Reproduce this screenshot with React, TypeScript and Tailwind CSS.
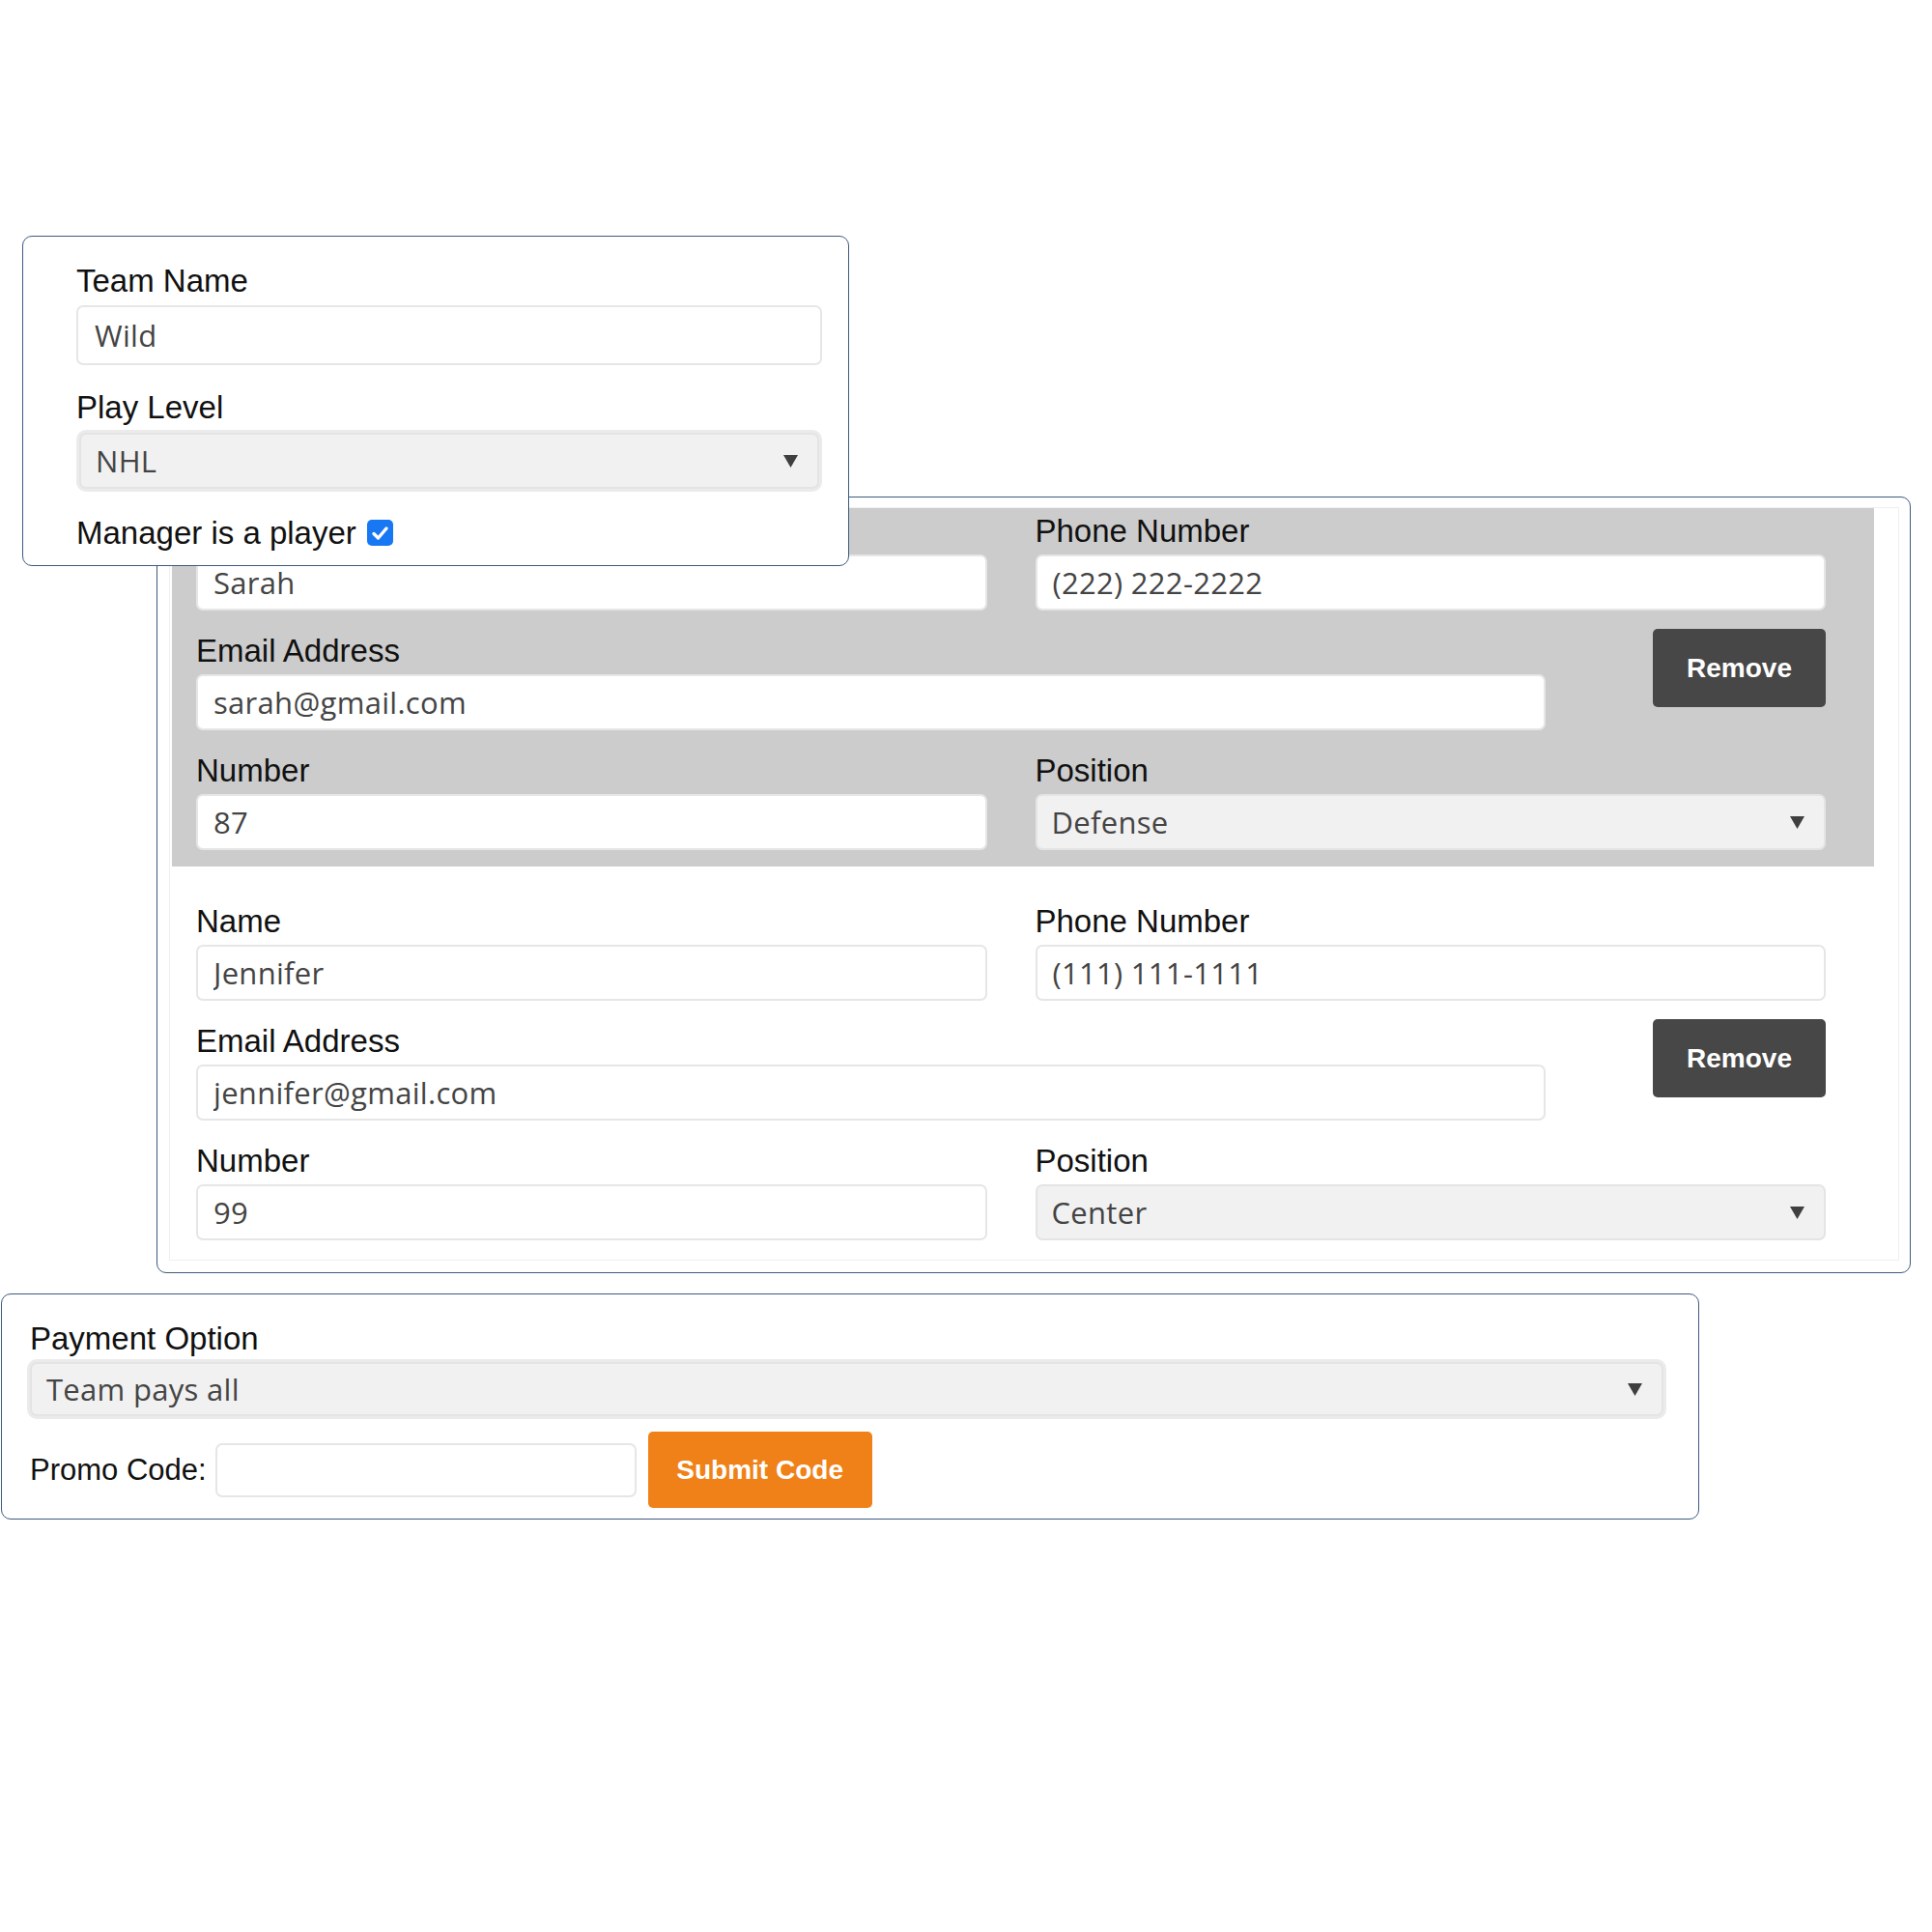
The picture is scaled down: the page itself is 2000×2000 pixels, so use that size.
import React from "react";

const label =
  "block whitespace-nowrap font-['Liberation_Sans',Arial,sans-serif] text-[33px] leading-[37px] text-[#111]";
const field =
  "rounded-[7px] border-2 border-[#e6e6e6] bg-white px-[16px] font-['Open_Sans',sans-serif] text-[31px] tracking-[0.3px] text-[#444] outline-none";

function Arrow() {
  return (
    <svg width="15" height="13" viewBox="0 0 15 13" aria-hidden="true" className="shrink-0">
      <polygon points="0,0 15,0 7.5,13" fill="#3f3f3f" />
    </svg>
  );
}

function Select({ value, ring = false, height = 58 }: { value: string; ring?: boolean; height?: number }) {
  const box = (
    <div
      className="flex items-center justify-between rounded-[7px] border-2 border-[#e4e4e4] bg-[#f1f1f1] pl-[15px] pr-[20px] font-['Open_Sans',sans-serif] text-[31px] tracking-[0.3px] text-[#444]"
      style={{ height }}
    >
      <span>{value}</span>
      <Arrow />
    </div>
  );
  if (!ring) return box;
  return <div className="rounded-[10px] bg-[#ebebeb] p-[3px]">{box}</div>;
}

function Field({ name, value, className = "" }: { name: string; value: string; className?: string }) {
  return (
    <div className={className}>
      <span className={label}>{name}</span>
      <input readOnly value={value} className={`${field} mt-[6px] h-[58px] w-full`} />
    </div>
  );
}

type Player = { name: string; phone: string; email: string; number: string; position: string; active?: boolean };

const players: Player[] = [
  { name: "Sarah", phone: "(222) 222-2222", email: "sarah@gmail.com", number: "87", position: "Defense", active: true },
  { name: "Jennifer", phone: "(111) 111-1111", email: "jennifer@gmail.com", number: "99", position: "Center" },
];

function PlayerRow({ player }: { player: Player }) {
  return (
    <div className={`pl-[25px] pr-[50px] pt-[5px] pb-[17px] ${player.active ? "bg-[#cccccc]" : "bg-white"}`}>
      <div className="grid grid-cols-2 gap-x-[50px]">
        <Field name="Name" value={player.name} />
        <Field name="Phone Number" value={player.phone} />
      </div>
      <div className="mt-[23px] flex items-start justify-between">
        <Field name="Email Address" value={player.email} className="w-[1397px]" />
        <button className="-mt-[4px] h-[81px] w-[179px] rounded-[5px] bg-[#474747] font-['Liberation_Sans',Arial,sans-serif] text-[28px] font-bold text-white">
          Remove
        </button>
      </div>
      <div className="mt-[23px] grid grid-cols-2 gap-x-[50px]">
        <Field name="Number" value={player.number} />
        <div>
          <span className={label}>Position</span>
          <div className="mt-[6px]">
            <Select value={player.position} />
          </div>
        </div>
      </div>
    </div>
  );
}

export default function App() {
  return (
    <div className="min-h-[2000px] w-[2000px] bg-white pt-[244px]">
      <section className="relative z-10 ml-[23px] w-[856px] rounded-[10px] border-[1.5px] border-[#3f5a80] bg-white pb-[15px] pl-[55px] pr-[27px] pt-[27px]">
        <span className={label}>Team Name</span>
        <input readOnly value="Wild" className={`${field} mt-[7px] h-[62px] w-full pl-[17px]`} />
        <span className={`${label} mt-[25px]`}>Play Level</span>
        <div className="mt-[5px]">
          <Select value="NHL" ring />
        </div>
        <div className="mt-[24px] flex items-center gap-[11px]">
          <span className={label}>Manager is a player</span>
          <span className="flex h-[27px] w-[27px] items-center justify-center rounded-[5px] bg-[#1877f2]">
            <svg width="19" height="16" viewBox="0 0 19 16" aria-hidden="true">
              <path d="M3 8.5 L7.5 13 L16 3" fill="none" stroke="white" strokeWidth="3.4" strokeLinecap="round" strokeLinejoin="round" />
            </svg>
          </span>
        </div>
      </section>

      <section className="-mt-[72px] ml-[162px] w-[1816px] rounded-[10px] border-[1.5px] border-[#3f5a80] bg-white pb-[12px] pl-[12px] pr-[11px] pt-[10px]">
        <div className="flex flex-col gap-[33px] border border-[#efefef] pb-[3px] pl-[2px] pr-[25px]">
          {players.map((p) => (
            <PlayerRow key={p.email} player={p} />
          ))}
        </div>
      </section>

      <section className="mt-[21px] ml-[1px] w-[1758px] rounded-[10px] border-[1.5px] border-[#3f5a80] bg-white pb-[11px] pl-[26px] pr-[33px] pt-[27px]">
        <span className={`${label} pl-[3px]`}>Payment Option</span>
        <div className="mt-[3px]">
          <Select value="Team pays all" ring height={56} />
        </div>
        <div className="mt-[13px] flex items-center">
          <span className="whitespace-nowrap pl-[3px] font-['Liberation_Sans',Arial,sans-serif] text-[31px] leading-[37px] text-[#111]">
            Promo Code:
          </span>
          <input readOnly value="" className={`${field} ml-[9px] h-[56px] w-[436px] shrink-0`} />
          <button className="ml-[12px] h-[79px] w-[232px] shrink-0 rounded-[5px] bg-[#ef8118] font-['Liberation_Sans',Arial,sans-serif] text-[28px] font-bold text-white">
            Submit Code
          </button>
        </div>
      </section>
    </div>
  );
}
